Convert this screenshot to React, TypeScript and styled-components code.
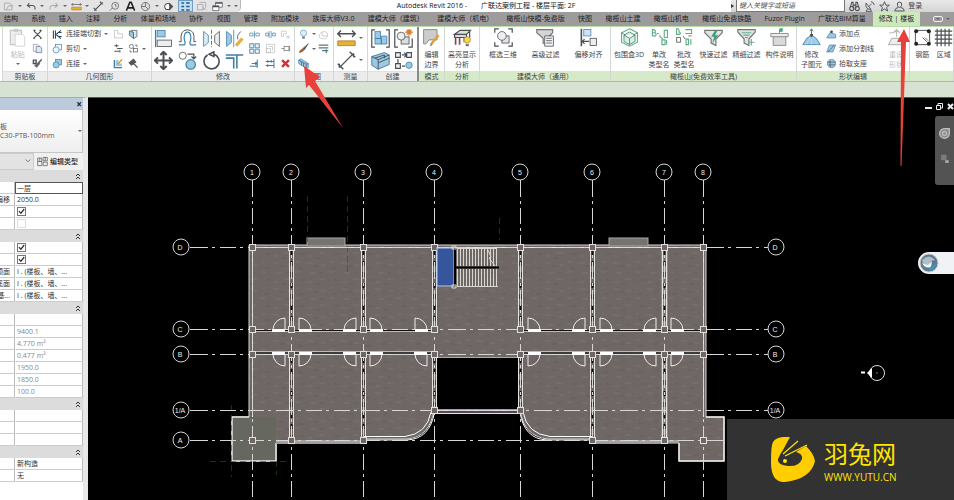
import React from 'react';
import styled, { createGlobalStyle, css } from 'styled-components';

const GlobalStyle = createGlobalStyle`
  * { box-sizing: border-box; }
  body { margin: 0; background: #000; }
  body, button, input, select, table {
    font-family: "Open Sans", "Noto Sans CJK SC", sans-serif;
    font-size: 7px;
    line-height: 10px;
    color: #333;
  }
  button { border: 0; padding: 0; background: none; cursor: pointer; }
`;

/* ---------- icons ---------- */

const K = '#4a4f54';
const B = '#9cc9e4';
const BD = '#3f7ea8';
const G = '#5dae85';

const small: Record<string, React.ReactNode> = {
  open: <path d="M2 3h8l3 3v7H2zM5 13l3-6h7" stroke="#999" />,
  undo: <path d="M5 3L2 6.500l4 3M2 6.500h7q5 0 4 6" stroke="#555" strokeWidth="1.500" />,
  redo: <path d="M11 3l3 3.500-4 3M14 6.500H7q-5 0-4 6" stroke="#aaa" strokeWidth="1.500" />,
  ruler: <><path d="M1 5h14M3 3L1 5l2 2M13 3l2 2-2 2" stroke={K} /><path d="M1 9h14v4H1z" fill="#e5ad32" stroke="#b9861c" /></>,
  dim: <path d="M2 14L14 2M1 10l4 4M10 1l4 4" stroke={K} strokeWidth="1.600" />,
  tag: <><circle cx="9" cy="7" r="5" stroke={K} /><path d="M1 14l4-4M8 5h2v4" stroke={K} /></>,
  letter: <path d="M2 14L7 2h2l5 12M4.500 10h7" stroke="#222" strokeWidth="2.200" />,
  home: <><circle cx="8" cy="8" r="6" fill="#ddd" stroke={K} /><path d="M2 8h6V2M8 8l4 4" stroke={K} /></>,
  section: <><circle cx="7" cy="8" r="4.500" fill="#fff" stroke={K} strokeWidth="1.500" /><path d="M9 2l6 6-6 6z" fill={K} /></>,
  thin: <path d="M2 3h4M2 8h4M2 13h4M9 3h5M9 8h5M9 13h5" stroke="#225c8c" strokeWidth="2.200" />,
  closeWin: <path d="M5 2h9v7M2 5h8v8H2zM10 9l4 4M14 9l-4 4" stroke="#999" />,
  windows: <><path d="M5 2h10v7H5z" fill="#fff" stroke={K} /><path d="M1 7h9v7H1z" fill="#fff" stroke={K} /><path d="M5 3h10M1 8h9" stroke={K} strokeWidth="2" /></>,
  binoc: <><circle cx="4" cy="11" r="3" stroke={K} strokeWidth="1.500" /><circle cx="12" cy="11" r="3" stroke={K} strokeWidth="1.500" /><path d="M2 9l2-7h2v9M14 9l-2-7h-2v9M6 6h4" stroke={K} strokeWidth="1.500" /></>,
  dish: <path d="M3 3q-2 9 7 9zM7 8l4-4M10 1q4 0 5 5M5 12l-2 3h8l-2-3" stroke={K} strokeWidth="1.300" />,
  star: <path d="M8 1l2 5h5l-4 3.500 1.500 5L8 11.500l-4.500 3 1.500-5L1 6h5z" stroke={K} strokeWidth="1.300" />,
  user: <path d="M8 1.500q4 0 3 5-1 3-3 3t-3-3q-1-5 3-5zM1 14q1-4 5-4.500M15 14q-1-4-5-4.500M1 14.500h14" stroke={K} strokeWidth="1.400" />,
  cut: <path d="M3 3l10 10M13 3L3 13M2 2h3M11 2h3M2 13l2 1M14 13l-2 1" stroke={K} strokeWidth="1.700" />,
  copy: <><path d="M2 2h6l2 2v8H2z" fill="#fff" stroke="#7790a0" /><path d="M6 5h6l2 2v7H6z" fill="#d8ecf5" stroke="#668" /></>,
  match: <><path d="M2 3h4v5H2zM9 8l5-6" stroke={K} strokeWidth="2" /><path d="M3 11l4 3 5-6-3-2z" fill="#666" /></>,
  cope: <path d="M2 2v12M5 2v12M6 8l7-6M6 8l7 6M9 5h5M9 11h5" stroke="#31495a" strokeWidth="1.600" />,
  cutGeo: <><rect x="5" y="2" width="9" height="8" fill="#fff" stroke={BD} /><circle cx="6" cy="10" r="4.500" fill="#eef6fa" stroke={BD} /></>,
  join: <><rect x="5" y="2" width="9" height="8" fill={B} stroke={BD} /><circle cx="6" cy="10" r="4.500" fill={B} stroke={BD} /></>,
  wallL: <path d="M2 2h5v5h7v6H2z" stroke="#b4b4b4" />,
  beam: <path d="M2 4h6M5 2v4M6 8h8M2 12h7M10 10v4" stroke={K} strokeWidth="1.400" />,
  edit: <><path d="M2 3v11h11" stroke={BD} strokeWidth="2" /><path d="M4 3v9h9V8H8V3z" fill={B} /><path d="M7 9l6-7" stroke="#cf9b29" strokeWidth="2" /></>,
  paint: <><path d="M2 3l6 2v9l-6-5z" fill={B} stroke={K} /><path d="M4 2h9v9l-5 3V5z" fill="#d9e8ee" stroke={K} /></>,
  split: <><circle cx="5" cy="5" r="3" stroke={K} /><rect x="8" y="8" width="6" height="5" stroke={K} /><path d="M10 3h3v3M3 10v3h3" stroke={K} /></>,
  hammer: <path d="M2 7l6-5 3 4-6 4zM8 8l6 6" stroke="#555" fill="#555" strokeWidth="2" />,
  splitEl: <path d="M1 6h5v4H1zM10 6h5v4h-5zM8 3v10" stroke={BD} />,
  gap: <path d="M1 6h4v4H1zM11 6h4v4h-4zM6 3v10M9 3v10" stroke={BD} />,
  offset: <path d="M2 3h7v4H5v4H2zM9 9l4 4M9 13h4V9" stroke="#bbb" />,
  array: <path d="M1 1h6v6H1zM9 1h6v6H9zM1 9h6v6H1zM9 9h6v6H9z" fill="#e5f1f7" stroke={BD} strokeWidth="1.200" />,
  scale: <path d="M2 2h12v12H2zM2 8h6v6H2zM5 5h6v6" stroke="#bbb" />,
  pin: <path d="M2 8h4M6 4v8M6 5h7v6H6M14 4v8" stroke="#666" />,
  trim1: <path d="M1 12h12M4 8h8M12 2v12M9 6l3 2-3 2" stroke={BD} strokeWidth="1.500" />,
  trim2: <path d="M1 5h12M1 11h12M13 1v14M4 3v4M9 3v4M4 9v4" stroke={BD} strokeWidth="1.500" />,
  del: <path d="M3 3l10 10M13 3L3 13" stroke="#cf3434" strokeWidth="3.500" />,
  bulb: <><circle cx="8" cy="6" r="4.500" fill="#dceefa" stroke="#719cb8" /><path d="M6 11h4v3H6z" fill="#777" /></>,
  brush: <><path d="M15 1L7 8l2 2z" fill="#555" stroke="#555" /><path d="M8 8q-4 0-7 6 5 1 8-4z" fill="#9b642b" /></>,
  hideBox: <path d="M2 8l4-4h5l3 2v5l-4 3H5l-3-2zM6 4v6h8" stroke="#bbb" />,
  lines: <path d="M1 3h14M1 7h14M6 11h9M12 9v6" stroke="#587586" strokeWidth="1.700" />,
  box3d: <><path d="M1 3l3-2 11 7v6l-3 1L1 8z" fill={B} stroke={BD} /><path d="M1 3l11 6v6M12 9l3-1M5 5v6M8 7v6" stroke="#31627f" /></>,
  addPt: <><path d="M1 13l5-8 8 3v5z" fill={B} stroke={BD} /><circle cx="8" cy="4" r="2" fill={K} /></>,
  addLine: <><path d="M1 13L5 3h9l-4 10z" fill={B} stroke={BD} /><path d="M3 13l9-10" stroke={K} /></>,
  pick: <><circle cx="8" cy="8" r="6" fill={B} stroke={BD} /><path d="M2 6h12M4 10h9M6 4v9" stroke={K} /></>,
  typeEd: <path d="M1 3h6v11H1zM9 2h6v5H9zM9 9h6v5H9zM1 8h6M4 3v5M12 2v5" stroke={K} />,
};

const big: Record<string, React.ReactNode> = {
  paste: <><path d="M3 3h14v18H3z" fill="#eee" stroke="#c5c5c5" strokeWidth="1.500" /><path d="M7 1h6v4H7z" fill="#ccc" /><path d="M9 8h9l3 3v12H9z" fill="#fff" stroke="#ccc" /></>,
  align: <><path d="M2 1v22" stroke={BD} strokeWidth="1.600" /><rect x="4" y="2" width="10" height="8" fill={B} stroke={BD} /><rect x="4" y="14" width="18" height="8" fill="#eee" stroke={K} /></>,
  offset: <><path d="M1 20h7q2-2 0-6Q7 4 12 4t4 10q-2 4 0 6h7" stroke={BD} strokeWidth="1.500" /><path d="M1 16h3Q2 1 12 1t8 15h3" stroke={K} strokeWidth="1.200" /></>,
  mirror: <><path d="M2 3l6 5v9l-6 5z" fill="#dcecf3" stroke={BD} /><path d="M22 3l-6 5v9l6 5z" fill="#eee" stroke={K} /><path d="M12 1v22" stroke={K} strokeDasharray="5 2" /></>,
  mirrorDraw: <><path d="M2 3l6 5v9l-6 5z" fill={B} stroke={BD} /><path d="M20 3l-4 5v5" stroke={K} /><path d="M11 1v22" stroke={BD} /><path d="M14 21l8-9" stroke="#e1b13d" strokeWidth="4" /></>,
  move: <path d="M12 1v22M1 12h22M8 5l4-4 4 4M8 19l4 4 4-4M5 8l-4 4 4 4M19 8l4 4-4 4" stroke={K} strokeWidth="2.500" />,
  copy: <><circle cx="6" cy="6" r="4.500" stroke={K} /><path d="M12 4h8v5M17 7l3 3 3-3" stroke={K} strokeWidth="1.500" /><circle cx="16" cy="17" r="6" fill={B} stroke={BD} strokeWidth="1.500" /></>,
  rotate: <path d="M15 4A9.500 9.500 0 1 1 7 5M15 1v6l-6-3z" stroke={K} strokeWidth="2" />,
  trim: <path d="M1 5h14v17M1 9h10v13M16 5h7" stroke={BD} strokeWidth="2" />,
  measure: <><path d="M1 6h22M5 2L1 6l4 4M19 2l4 4-4 4" stroke={K} strokeWidth="1.800" /><path d="M1 15h22v6H1z" fill="#e6b13b" stroke="#a97718" /></>,
  diag: <path d="M3 21L21 3M1 16l7 7M16 1l7 7M3 21v-5M21 3v5" stroke={K} strokeWidth="1.700" />,
  comp: <><path d="M5 1H1v22h4M19 1h4v22h-4" stroke={K} strokeWidth="1.500" /><path d="M5 3h7v9H5zM5 12h8v7H5zM13 9h7v10h-7z" fill={B} stroke={BD} /></>,
  family: <><path d="M5 1H1v22h4M18 23h5V12" stroke={K} strokeWidth="1.500" /><rect x="9" y="10" width="10" height="9" fill="#ddd" stroke={K} /><circle cx="9" cy="9" r="5" fill="#eee" stroke={K} /><path d="M19 0v9M14 4h10M16 1l6 6M22 1l-6 6" stroke="#dd7b2b" strokeWidth="1.600" /></>,
  blocks: <><path d="M1 7l16-5 6 3v12L9 23l-8-5z" fill={B} stroke={BD} strokeWidth="1.200" /><path d="M1 7l8 4v12M9 11l14-6M5 9l12-4v4M9 15l14-6" stroke={K} strokeWidth="1.200" /></>,
  group: <><path d="M2 2h6v6H2zM16 2h6v6h-6zM2 16h6v6H2z" fill="#eee" stroke={K} strokeWidth="1.400" /><circle cx="19" cy="18" r="4" fill={B} stroke={BD} /><path d="M10 5h5M5 10v5M13 2l3 3-3 3M10 19h4" stroke={K} strokeWidth="1.500" /></>,
  boundary: <><path d="M2 2h17v13H9l-4 5H2z" fill="#ccc" stroke="#777" /><path d="M11 21l10-12" stroke="#dca23b" strokeWidth="3" /><path d="M10 22l3-1" stroke={K} /></>,
  table: <><path d="M2 8l7-5h13l-5 5zM2 8h15v4H2zM3 12v9M8 12v9M14 12v6M21 4v10" fill="#ddd" stroke={K} strokeWidth="1.500" /><circle cx="18" cy="15" r="4" fill="#f5d65b" stroke="#b6902a" /><path d="M16 20h4v3h-4z" fill="#777" /><path d="M4 13v8M9 13v8" stroke="#b65353" /></>,
  frame: <><path d="M1 6V1h5M18 1h5v5M23 18v5h-5M6 23H1v-5" stroke={K} strokeWidth="1.500" /><rect x="10" y="10" width="9" height="9" fill="#e4e4e4" stroke={K} /><circle cx="10" cy="10" r="5.500" fill="#eee" stroke={K} /></>,
  filter: <><path d="M1 2h20v4l-7 7v8l-5-2v-6L1 6z" fill="#d5d5d5" stroke="#777" strokeWidth="1.500" /><path d="M11 10h11v13H11z" fill="#f4f4f4" stroke={K} /><path d="M13 13h7M13 16h7M13 19h7" stroke={K} /></>,
  shift: <><path d="M3 1v22" stroke={K} strokeWidth="2" /><rect x="6" y="2" width="9" height="8" fill="#cfe3f7" stroke="#5085b7" /><rect x="14" y="13" width="8" height="9" fill="#eee" stroke={K} /><path d="M4 17h9M7 14l-3 3 3 3" stroke={K} strokeWidth="1.500" /></>,
  bbox: <><path d="M12 1l10 5v12l-10 5-10-5V6z" stroke={G} strokeWidth="1.400" /><path d="M12 5l7 4v8l-7 4-7-4V9zM5 9l7 4 7-4M12 13v8M2 6l5 3M22 6l-5 3" stroke="#397c60" fill="#dcefe5" /></>,
  ren1: <><path d="M3 2v8h4q2-2-1-4 2-2-1-4zM3 6h3M12 10l4 4M15 15h4v6h-4zM21 15v6M18 3h4v9h-4z" stroke={G} strokeWidth="1.400" /><path d="M9 7h2M12 9h1" stroke={K} /></>,
  ren2: <><path d="M2 1v7h4q2-2-1-3 1-2-1-4zM13 2h8v5h-8M14 14h3v7h-3zM20 14v7" stroke={G} strokeWidth="1.400" /><path d="M2 12h5v6H2zM10 10l3 4M17 10h4" stroke={K} /></>,
  fast: <><path d="M1 3h22v3l-8 8v8l-6-3v-5L1 6z" fill="#e5e5e5" stroke="#777" strokeWidth="1.500" /><path d="M14 3l-5 8h4l-3 9 8-11h-4l3-6z" fill="#2fa577" /></>,
  fine: <><path d="M1 2h22v3l-8 9v8l-6-3v-5L1 5z" fill="#e2e2e2" stroke="#777" strokeWidth="1.500" /><path d="M6 6h12M8 9h8M10 12h4M18 14v8M14 18h8" stroke="#61ae8d" strokeWidth="1.500" /></>,
  info: <><path d="M4 10h16v12H4z" fill="#d9d9d9" stroke="#777" /><path d="M1 7h22v4H1z" fill="#eee" stroke="#777" /><path d="M12 6V2" stroke={K} /><circle cx="14" cy="2.500" r="2.500" fill="#51a681" /></>,
  subel: <><path d="M1 21l5-8 6-4 6 4 5 8z" fill={B} stroke={BD} /><path d="M12 9v12M12 9L5 21M12 9l7 12" stroke="#b8e0f3" /><path d="M12 2v10M10 4l2-3 2 3" stroke={K} /><circle cx="12" cy="9" r="2" fill={K} /></>,
  reset: <path d="M2 21l4-8h12l4 8zM12 2v9M8 6l4-4 4 4M3 6h5" stroke="#bbb" fill="#eee" strokeWidth="1.500" />,
  rebar: <><path d="M3 3h18v18H3z" stroke={K} strokeWidth="1.200" /><path d="M12 12l6 6M15 12l4 4" stroke={K} /><g fill="#222"><circle cx="4" cy="4" r="2.500" /><circle cx="20" cy="4" r="2.500" /><circle cx="4" cy="20" r="2.500" /><circle cx="20" cy="20" r="2.500" /></g></>,
  mesh: <path d="M4 1v22M9 1v22M14 1v22M19 1v22M1 4h22M1 9h22M1 14h22M1 19h22" stroke={K} strokeWidth="1.500" />,
};

const SmallSvg = styled.svg`width: 11px; height: 11px; flex: none; display: block;`;
const BigSvg = styled.svg`width: 19px; height: 19px; flex: none; display: block;`;
const Sm = ({ n }: { n: string }) => <SmallSvg viewBox="0 0 16 16" fill="none">{small[n]}</SmallSvg>;
const Lg = ({ n }: { n: string }) => <BigSvg viewBox="0 0 24 24" fill="none">{big[n]}</BigSvg>;

const Caret = styled.span`
  flex: none; width: 0; height: 0;
  border: 2px solid transparent; border-top-color: #666; border-bottom: 0;
`;

/* ---------- title bar ---------- */

const Page = styled.div`min-height: 100vh; display: flex; flex-direction: column; position: relative; overflow: hidden;`;
const TitleBar = styled.header`
  display: grid; grid-template-columns: 241fr 490fr 223fr; height: 12px; background: #fff;
`;
const QuickBar = styled.div`
  display: flex; align-items: center; justify-content: space-between; padding: 0 2px;
  background: #e4e4e4; border-right: 1px solid #bbb; border-radius: 0 0 5px 0;
`;
const QuickButton = styled.button<{ $on?: boolean }>`
  display: flex; align-items: center; height: 12px; padding: 0 1px;
  ${p => p.$on && css`background: #c3def3; border: 1px solid #6d9dc4;`}
`;
const DocTitle = styled.h1`
  margin: 0; display: flex; gap: 14px; align-items: center; justify-content: center;
  font-size: 7px; line-height: 10px; font-weight: 400; color: #111; white-space: nowrap;
`;
const InfoCenter = styled.div`
  display: flex; align-items: center; gap: 2px; background: linear-gradient(#e9e9e9, #d4d4d4);
`;
const Search = styled.input`
  width: 49%; height: 12px; padding: 0 2px; margin-right: 1px; border: 1px solid #777; border-top: 0;
  background: #fff; font-style: italic; &::placeholder { color: #555; opacity: 1; }
`;
const Play = styled.span`width: 0; height: 0; border: 2px solid transparent; border-left: 3px solid #333; border-right: 0;`;

/* ---------- tabs ---------- */

const TabBar = styled.nav`
  display: grid; grid-template-columns: 873fr 47fr 34fr; height: 14px; background: #9d9b9c;
`;
const TabGroup = styled.div`
  display: flex; justify-content: space-between; padding: 0 7px 0 4px; min-width: 0;
`;
const Tab = styled.button<{ $active?: boolean }>`
  white-space: nowrap; color: #222; line-height: 14px;
  ${p => p.$active && css`background: #cde8bb;`}
`;
const TabEnd = styled.div`display: flex; align-items: center; justify-content: center; gap: 3px; padding-left: 8px;`;
const Expand = styled.button`width: 10px; height: 6px; border: 1px solid #eee; border-radius: 2px; display: grid; place-items: center;`;

/* ---------- ribbon ---------- */

const Ribbon = styled.section`
  display: grid; height: 56px; background: #fff;
  grid-template-columns: 3fr 45fr 104fr 143fr 39fr 34fr 51fr 26fr 35fr 131fr 186fr 113fr 44fr;
  border-bottom: 1px solid #9fc98a; border-top: 1px solid #b9dca8;
`;
const PanelBox = styled.div<{ $green?: boolean; $thick?: boolean }>`
  display: flex; flex-direction: column; min-width: 0; overflow: hidden;
  border-right: ${p => (p.$thick ? '2px solid #8a8a8a' : '1px solid #d4d8d2')};
  --title: ${p => (p.$green ? '#d6eac9' : '#ececec')};
`;
const PanelBody = styled.div<{ $cols: string }>`
  flex: 1; display: grid; grid-template-columns: ${p => p.$cols}; min-height: 0;
`;
const PanelTitle = styled.div`
  height: 10px; background: var(--title); border-top: 1px solid #dde3d9; text-align: center; line-height: 9px; white-space: nowrap; color: #444;
`;
const Stack = styled.div<{ $rows?: number }>`
  display: grid; grid-template-rows: repeat(${p => p.$rows ?? 3}, minmax(0, 1fr)); align-items: center; justify-items: start; min-width: 0;
`;
const Tool = styled.button<{ $gap?: number }>`
  display: flex; align-items: center; gap: ${p => p.$gap ?? 3}px; white-space: nowrap; color: #444;
`;
const BigTool = styled.button<{ $dim?: boolean }>`
  display: flex; flex-direction: column; align-items: center; justify-content: flex-start; gap: 3px;
  padding-top: 1px; min-width: 0; white-space: nowrap; color: ${p => (p.$dim ? '#bbb' : '#444')};
`;

const Panel = ({ title, cols, green, thick, children }: {
  title: string; cols: string; green?: boolean; thick?: boolean; children?: React.ReactNode;
}) => (
  <PanelBox $green={green} $thick={thick}>
    <PanelBody $cols={cols}>{children}</PanelBody>
    <PanelTitle>{title}</PanelTitle>
  </PanelBox>
);
const Icons = ({ names }: { names: string[] }) => (
  <Stack>{names.map(n => <Tool key={n} aria-label={n}><Sm n={n} /></Tool>)}</Stack>
);
const LargeIcons = ({ names }: { names: string[] }) => (
  <Stack $rows={2}>{names.map(n => <Tool key={n} aria-label={n}><Lg n={n} /></Tool>)}</Stack>
);
const Big = ({ n, lines, dim }: { n: string; lines: string[]; dim?: boolean }) => (
  <BigTool $dim={dim} disabled={dim}>
    <Lg n={n} />
    <span>{lines.map((l, i) => <React.Fragment key={l}>{i > 0 && <br />}{l}</React.Fragment>)}</span>
  </BigTool>
);

const OptionsBar = styled.div`height: 15px; background: #d8e2d3;`;

/* ---------- properties ---------- */

const Work = styled.main`flex: 1; display: flex; align-items: stretch; background: #000;`;
const Palette = styled.aside`
  flex: 0 0 88px; background: #fff; border-right: 5px solid #e7e8ea; min-width: 0; overflow: hidden;
  border-top: 1px solid #aaa;
`;
const PaletteHead = styled.div`
  display: flex; justify-content: flex-end; align-items: center; height: 11px; background: #bccbdc; padding-right: 1px;
`;
const Close = styled.button`font-weight: 700; font-size: 10px; color: #222;`;
const TypeBox = styled.div`
  display: flex; align-items: center; justify-content: space-between; height: 44px; border: 1px solid #c6c6c6; border-left: 0;
  background: linear-gradient(#fff, #eee); white-space: nowrap; line-height: 9px;
`;
const TypeName = styled.div`display: flex; flex-direction: column; color: #555;`;
const TypeRow = styled.div`
  display: flex; height: 17px; align-items: stretch; background: #f1f1f1;
`;
const Instance = styled.select`
  width: 34px; appearance: none; border: 1px solid #ccc; border-left: 0; background: #e3e3e3; border-radius: 0;
`;
const SelectWrap = styled.div`display: grid; position: relative;`;
const Chevron = styled.svg`position: absolute; right: 3px; top: 5px; width: 6px; height: 6px; pointer-events: none;`;
const EditType = styled.button`display: flex; align-items: center; gap: 2px; padding-left: 3px; color: #222; font-weight: 500;`;
const Props = styled.table`
  width: 100%; table-layout: fixed; border-collapse: separate; border-spacing: 0;
`;
const GroupCell = styled.th`
  height: 12px; padding: 0 2px; background: #dcdcdc; text-align: right; line-height: 0; font-weight: 400;
`;
const LabelCell = styled.th`
  width: 15px; height: 12px; padding: 0 4px 0 0; border-right: 1px solid #bbb; border-bottom: 1px solid #ccc;
  font-weight: 400; line-height: 10px; color: #333;
`;
const LabelText = styled.div`display: flex; justify-content: flex-end; white-space: nowrap; overflow: hidden;`;
const ValueCell = styled.td<{ $dim?: boolean; $focus?: boolean }>`
  height: 12px; padding: 0 1px; white-space: nowrap; overflow: hidden; line-height: 9px;
  color: ${p => (p.$dim ? '#888' : '#333')};
  border: 1px solid transparent; border-bottom: 1px solid #ccc; border-right-color: #bbb; border-top: 0;
  ${p => p.$focus && css`border: 1px solid #555;`}
`;
const Field = styled.input`width: 100%; height: 9px; padding: 0; border: 0; outline: 0; display: block; line-height: 9px; background: none;`;
const Check = styled.input`
  appearance: none; display: block; width: 9px; height: 9px; margin: 0; border: 1px solid #777; background: #fff;
  &:checked::before {
    content: ''; display: block; width: 7px; height: 7px; background: #333;
    clip-path: polygon(5% 50%, 20% 38%, 40% 62%, 82% 8%, 96% 20%, 42% 88%);
  }
  &:disabled { border-color: #ddd; }
`;

type Row = { label?: string; value?: string; check?: boolean; off?: boolean; dim?: boolean; focus?: boolean };
const layers = 'I . (楼板、墙、...';
const groups: Row[][] = [
  [{ value: '一层', focus: true }, { label: '偏移', value: '2050.0' }, { check: true }, { check: false, off: true }],
  [{ check: true }, { check: true }, { label: '顶面', value: layers }, { label: '底面', value: layers }, { label: '基...', value: layers }],
  [{}, { value: '9400.1', dim: true }, { value: '4.770 m²', dim: true }, { value: '0.477 m³', dim: true },
    { value: '1950.0', dim: true }, { value: '1850.0', dim: true }, { value: '100.0', dim: true }],
  [{}, {}, {}],
  [{ value: '新构造' }, { value: '无' }],
];
const Fold = styled.svg`width: 6px; height: 8px;`;

const Properties = () => (
  <Palette aria-label="属性">
    <PaletteHead><Close aria-label="关闭">×</Close></PaletteHead>
    <TypeBox>
      <TypeName><span>板</span><span>C30-PTB-100mm</span></TypeName>
      <Caret />
    </TypeBox>
    <TypeRow>
      <SelectWrap>
        <Instance aria-label="实例"><option> </option></Instance>
        <Chevron viewBox="0 0 8 8" fill="none" stroke="#555"><path d="M1 2l3 3 3-3" /></Chevron>
      </SelectWrap>
      <EditType><Sm n="typeEd" />编辑类型</EditType>
    </TypeRow>
    <Props>
      <colgroup><col width="15" /><col /></colgroup>
      {groups.map((rows, g) => (
        <tbody key={g}>
          <tr><GroupCell colSpan={2}>
            <Fold viewBox="0 0 6 8" fill="none" stroke="#333"><path d="M1 4l2-2 2 2M1 7l2-2 2 2" /></Fold>
          </GroupCell></tr>
          {rows.map((r, i) => (
            <tr key={i}>
              <LabelCell scope="row"><LabelText>{r.label}</LabelText></LabelCell>
              <ValueCell $dim={r.dim} $focus={r.focus}>
                {r.check !== undefined
                  ? <Check type="checkbox" aria-label={`选项 ${i}`} defaultChecked={r.check} disabled={r.off} />
                  : r.focus ? <Field aria-label="标高" defaultValue={r.value} /> : r.value}
              </ValueCell>
            </tr>
          ))}
        </tbody>
      ))}
    </Props>
  </Palette>
);

/* ---------- floor plan ---------- */

const Canvas = styled.section`flex: 1; min-width: 0; position: relative; background: #000; border-top: 1px solid #555;`;
const PlanSvg = styled.svg`display: block; width: 100%; height: auto;`;

const axes: [string, number][] = [['1', 252], ['2', 291], ['3', 363], ['4', 434], ['5', 520], ['6', 592], ['7', 664], ['8', 703]];
const levels: [string, number][] = [['D', 247], ['C', 329], ['B', 354], ['1/A', 410], ['A', 440]];
/* x of the leaf, and the side the opening lies on */
const doors: [number, number][] = [[285, -1], [299, 1], [356, -1], [370, 1], [528, 1], [585, -1], [600, 1], [656, -1], [671, 1]];

const Door = ({ x, dir, up, y }: { x: number; dir: number; up: number; y: number }) => (
  <g>
    <path d={`M${x} ${y}v${-12 * up}A12 12 0 0 ${dir * up > 0 ? 1 : 0} ${x + 12 * dir} ${y}`} fill="none" stroke="#eee" />
    <rect x={dir > 0 ? x : x - 13} y={y - (up > 0 ? 1 : 2)} width="13" height="3" fill="#fff" />
  </g>
);

const outline = 'M249 245H706V417H724V461H679V443H592V439H548Q524 437 520 410H434Q430 437 407 439H363V443H276V461H232V417H249Z';

const Plan = () => (
  <PlanSvg viewBox="88 98 866 402" role="img" aria-label="楼层平面 2F">
    <defs>
      <pattern id="slab" width="34" height="26" patternUnits="userSpaceOnUse">
        <rect width="34" height="26" fill="#6f6765" />
        <path d="M1 3h6M15 5h4M4 13h6M23 12h5M2 22h4M24 2h3M13 19h6" stroke="#746d69" strokeWidth="2" />
        <path d="M8 6h4M26 8h5M14 13h3M10 24h4M28 20h5" stroke="#6a625f" strokeWidth="2" />
      </pattern>
    </defs>
    <path d={outline} fill="url(#slab)" stroke="#d8d4d2" />
    <path d="M232 417H276V461H232Z" fill="#666860" />
    <path d="M249 417H232V461H276V443M706 417H724V461H679V443" fill="none" stroke="#e8e8e8" strokeWidth="1.500" />
    <path d="M436 358H519V409H436Z" fill="#000" />
    <g fill="#777371" stroke="#aaa">
      <rect x="307" y="238" width="38" height="8" /><rect x="609" y="238" width="39" height="8" />
    </g>
    <g stroke="#1f5a2a" strokeDasharray="6 4" opacity=".6">
      <path d="M307.500 196v48M347.500 196v76M499.500 218v22M231.500 405v72M210 461.500h78M276.500 461v14" />
    </g>

    <g stroke="#e6e3e1" fill="none">
      <path d="M252.500 417V247.500H703.500V417M276 441H363" />
      {[291.500, 363.500, 592.500, 664.500].map(x => <path key={x} d={`M${x - 2} 248V331M${x + 2} 248V331M${x - 2} 353V441M${x + 2} 353V441`} strokeWidth={x > 660 ? 1.500 : 1} />)}
      {[434.500, 520.500].map(x => <path key={x} d={`M${x - 2} 248V331M${x + 2} 248V331M${x - 2} 353V410M${x + 2} 353V410`} />)}
      <path d="M252 331.500H434M520 331.500H703M252 351.500H434M520 351.500H703" stroke="#bbb" />
      <path d="M592 441H679" />
      <path d="M363 436.500H405Q427 434 431 412M434.500 412Q430 439 407 440H363" stroke="#fff" />
      <path d="M592 436.500H550Q527 434 523 412M520 412Q524 439 547 440H592" stroke="#fff" />
      <path d="M436 357.500H519" stroke="#aaa" />
      <path d="M436 410.500H519M436 413.500H519" />
      <path d="M436 412H519M276 443.500H363M592 443.500H664" stroke="#b58aac" />
    </g>
    <path d="M256 330.500H434M522 330.500H703M256 353H434M522 353H703" stroke="#111" />
    <path d="M256 354.500H434M522 354.500H703" stroke="#ddd" />
    <g stroke="#111" strokeDasharray="5 6">
      {[291.500, 363.500, 434.500, 520.500, 592.500, 664.500].map(x => <path key={x} d={`M${x} 250V326M${x} 358V${x > 430 && x < 530 ? 406 : 436}`} strokeWidth="2" />)}
    </g>

    <g stroke="#d6d6d6" fill="none">
      {axes.map(([n, x]) => <path key={n} d={`M${x + .5} 180V497`} strokeDasharray="17 4 3 4 16 4 3 4 16 4 3 4" />)}
      {levels.map(([n, y]) => <path key={n} d={`M190 ${y + .5}H768`} strokeDasharray="18 4 3 5 16 4 3 5 16 4 3 5" />)}
      {axes.map(([n, x]) => <circle key={n} cx={x} cy="172" r="8" />)}
      {levels.map(([n, y]) => <g key={n}><circle cx="181" cy={y} r="8" /><circle cx="776" cy={y} r="8" /></g>)}
    </g>
    <g fill="#eee" fontSize="7" textAnchor="middle" fontFamily="Liberation Sans, sans-serif">
      {axes.map(([n, x]) => <text key={n} x={x} y="175">{n}</text>)}
      {levels.map(([n, y]) => <g key={n}><text x="180" y={y + 3}>{n}</text><text x="775" y={y + 3}>{n}</text></g>)}
    </g>

    {doors.map(([x, dir]) => (
      <g key={x}><Door x={x} dir={dir} up={1} y={330} /><Door x={x} dir={dir} up={-1} y={354} /></g>
    ))}
    <Door x={415} dir={1} up={1} y={330} /><Door x={427} dir={-1} up={-1} y={354} />

    <g fill="#6f6765" stroke="#e2dfdd">
      {axes.map(([n, x]) => {
        const inner = n === '4' || n === '5';
        return [247, 329, 354, inner ? 410 : 440].map(y => <rect key={n + y} x={x - 2.500} y={y - 2.500} width="6" height="6" />);
      })}
    </g>

    <rect x="437" y="248" width="17" height="38" fill="#35569c" stroke="#b8c7e4" />
    <path d="M455 248V286" stroke="#000" strokeWidth="2" />
    <g stroke="#d8d8d0" fill="none">
      {Array.from({ length: 14 }, (_, i) => <path key={i} d={`M${457.500 + i * 3} 248V266M${457.500 + i * 3} 269V286`} />)}
      <path d="M457 248.500H496M457 286.500H498M487 248l4 9-2 1 6 8" />
      <path d="M452 246h4v3h-4zM452 285h4v3h-4z" />
    </g>
    <path d="M455 267.500H499" stroke="#000" strokeWidth="2" />

    <circle cx="877" cy="373" r="7.500" fill="none" stroke="#ddd" />
    <path d="M867 373l5-5v10z" fill="#fff" /><path d="M861 372.500h4" stroke="#fff" strokeWidth="2" /><circle cx="877" cy="373" r=".7" fill="#aaa" />
  </PlanSvg>
);

const WindowButtons = styled.div`position: absolute; top: 4px; right: 0; display: flex; gap: 4px;`;
const WinSvg = styled.svg`width: 7px; height: 9px; display: block;`;
const NavBar = styled.div`
  position: absolute; top: 18px; right: 0; width: 19px; height: 69px; border-radius: 3px 0 0 3px; background: #535353;
  display: flex; flex-direction: column; align-items: center; gap: 15px; padding-top: 12px;
`;
const Pill = styled.button`
  position: absolute; top: 154px; right: 0; width: 36px; height: 22px; border-radius: 11px 0 0 11px; background: #f1f2f5;
  display: flex; align-items: center; padding-left: 1px;
`;
const Orb = styled.svg`width: 20px; height: 20px;`;
const Brand = styled.div`
  position: absolute; right: 0; bottom: 0; width: 227px; height: 81px; background: #323232;
  display: flex; align-items: center; gap: 8px; padding-left: 44px;
`;
const BrandMark = styled.svg`width: 45px; height: 46px;`;
const BrandText = styled.div`display: flex; flex-direction: column; color: #ffe600;`;
const BrandName = styled.span`font-size: 24px; line-height: 34px;`;
const BrandUrl = styled.a`font-size: 10px; line-height: 12px; color: #ffe600; text-decoration: none;`;
const Arrows = styled.svg`position: absolute; left: 0; top: 0; width: 100%; pointer-events: none;`;

const tabs = ['结构', '系统', '插入', '注释', '分析', '体量和场地', '协作', '视图', '管理', '附加模块', '族库大师V3.0',
  '建模大师（建筑）', '建模大师（机电）', '橄榄山快模-免费版', '快图', '橄榄山土建', '橄榄山机电', '橄榄山免费族酷', 'Fuzor Plugin', '广联达BIM算量'];
const quick = ['open', '.', 'undo', '.', 'redo', '.', 'ruler', '.', 'dim', 'tag', 'letter', 'home', '.', 'section', 'thin', 'closeWin', 'windows', '.', '.'];

export default function App() {
  return (
    <Page>
      <GlobalStyle />
      <TitleBar>
        <QuickBar>
          {quick.map((n, i) => (n === '.' ? <Caret key={i} /> : <QuickButton key={i} aria-label={n} $on={n === 'thin'}><Sm n={n} /></QuickButton>))}
        </QuickBar>
        <DocTitle><span>Autodesk Revit 2016 -</span><span>广联达案例工程 - 楼层平面: 2F</span></DocTitle>
        <InfoCenter>
          <Play />
          <Search aria-label="搜索" placeholder="键入关键字或短语" />
          {['binoc', 'dish', 'star', 'user'].map(n => <QuickButton key={n} aria-label={n}><Sm n={n} /></QuickButton>)}
          <Tool>登录</Tool>
        </InfoCenter>
      </TitleBar>
      <TabBar>
        <TabGroup>{tabs.map(t => <Tab key={t}>{t}</Tab>)}</TabGroup>
        <Tab $active>修改 | 楼板</Tab>
        <TabEnd><Expand aria-label="展开"><Caret /></Expand><Caret /></TabEnd>
      </TabBar>
      <Ribbon>
        <PanelBox />
        <Panel title="剪贴板" cols="30fr 15fr">
          <BigTool $dim><Lg n="paste" /><span>粘贴</span><Caret /></BigTool>
          <Icons names={['cut', 'copy', 'match']} />
        </Panel>
        <Panel title="几何图形" cols="4fr 62fr 15fr 23fr">
          <span />
          <Stack>
            <Tool><Sm n="cope" />连接端切割 <Caret /></Tool>
            <Tool><Sm n="cutGeo" />剪切 <Caret /></Tool>
            <Tool><Sm n="join" />连接 <Caret /></Tool>
          </Stack>
          <Icons names={['wallL', 'beam', 'edit']} />
          <Stack>
            <Tool aria-label="paint"><Sm n="paint" /></Tool>
            <Tool aria-label="split"><Sm n="split" /><Caret /></Tool>
            <Tool aria-label="hammer"><Sm n="hammer" /></Tool>
          </Stack>
        </Panel>
        <Panel title="修改" cols="2fr 24fr 24fr 24fr 24fr 16fr 15fr 14fr">
          <span />
          <LargeIcons names={['align', 'move']} />
          <LargeIcons names={['offset', 'copy']} />
          <LargeIcons names={['mirror', 'rotate']} />
          <LargeIcons names={['mirrorDraw', 'trim']} />
          <Icons names={['splitEl', 'array', 'trim1']} />
          <Icons names={['gap', 'scale', 'trim2']} />
          <Icons names={['offset', 'pin', 'del']} />
        </Panel>
        <Panel title="视图" cols="3fr 21fr 15fr">
          <span />
          <Stack>
            <Tool aria-label="bulb"><Sm n="bulb" /><Caret /></Tool>
            <Tool aria-label="brush"><Sm n="brush" /><Caret /></Tool>
            <Tool aria-label="box"><Sm n="box3d" /></Tool>
          </Stack>
          <Stack><Tool aria-label="hide"><Sm n="hideBox" /></Tool><Tool aria-label="lines"><Sm n="lines" /></Tool></Stack>
        </Panel>
        <Panel title="测量" cols="3fr 31fr">
          <span />
          <Stack $rows={2}>
            <Tool aria-label="measure"><Lg n="measure" /><Caret /></Tool>
            <Tool aria-label="dimension"><Lg n="diag" /><Caret /></Tool>
          </Stack>
        </Panel>
        <Panel title="创建" cols="3fr 24fr 24fr" thick>
          <span />
          <LargeIcons names={['comp', 'blocks']} />
          <LargeIcons names={['family', 'group']} />
        </Panel>
        <Panel title="模式" cols="1fr" green><Big n="boundary" lines={['编辑', '边界']} /></Panel>
        <Panel title="分析" cols="1fr" green><Big n="table" lines={['高亮显示', '分析']} /></Panel>
        <Panel title="建模大师（通用）" cols="2fr 42fr 43fr 43fr" green>
          <span />
          <Big n="frame" lines={['框选三维']} /><Big n="filter" lines={['高级过滤']} /><Big n="shift" lines={['偏移对齐']} />
        </Panel>
        <Panel title="橄榄山(免费效率工具)" cols="36fr 24fr 26fr 33fr 33fr 33fr" green>
          <Big n="bbox" lines={['包围盒3D']} /><Big n="ren1" lines={['单改', '类型名']} /><Big n="ren2" lines={['批改', '类型名']} />
          <Big n="fast" lines={['快速过滤']} /><Big n="fine" lines={['精细过滤']} /><Big n="info" lines={['构件说明']} />
        </Panel>
        <Panel title="形状编辑" cols="29fr 57fr 26fr" green>
          <Big n="subel" lines={['修改', '子图元']} />
          <Stack>
            <Tool $gap={2}><Sm n="addPt" />添加点</Tool>
            <Tool $gap={2}><Sm n="addLine" />添加分割线</Tool>
            <Tool $gap={2}><Sm n="pick" />拾取支座</Tool>
          </Stack>
          <Big n="reset" lines={['重设', '形状']} dim />
        </Panel>
        <Panel title="" cols="25fr 19fr" green>
          <Big n="rebar" lines={['钢筋']} /><Big n="mesh" lines={['区域']} />
        </Panel>
      </Ribbon>
      <OptionsBar />
      <Work>
        <Properties />
        <Canvas>
          <Plan />
          <WindowButtons>
            <WinSvg viewBox="0 0 7 9" stroke="#eee" strokeWidth="2"><path d="M0 6h7" /></WinSvg>
            <WinSvg viewBox="0 0 7 9" stroke="#eee" fill="none"><path d="M2 3V1.500h4.500V6H5M.5 3.500h4v4h-4z" /></WinSvg>
            <WinSvg viewBox="0 0 7 9" stroke="#eee" strokeWidth="2"><path d="M1 2l5 5M6 2L1 7" /></WinSvg>
          </WindowButtons>
          <NavBar>
            <SmallSvg viewBox="0 0 16 16" fill="none" stroke="#bbb" strokeWidth="2"><path d="M9 1h6v7a7 7 0 11-6-7z" fill="#888" /><circle cx="8" cy="8" r="3" /></SmallSvg>
            <SmallSvg viewBox="0 0 16 16"><path d="M3 1h8v8H3z" fill="#7c7c72" /><path d="M9 9h5v4H9z" fill="#aaa" /></SmallSvg>
          </NavBar>
          <Pill aria-label="助手">
            <Orb viewBox="0 0 20 20">
              <circle cx="10" cy="10" r="9" fill="#62798c" stroke="#c5cdd4" />
              <path d="M3 7q7-7 13 0l-4 1-2 5-6-3z" fill="#aebfca" /><path d="M3 10l6 2 4-4-1 6q-6 2-9-4z" fill="#eef4f7" /><path d="M10 18q6-1 8-8l-7 4z" fill="#3d95bd" />
            </Orb>
          </Pill>
          <Brand>
            <BrandMark viewBox="0 0 45 46">
              <path d="M19 0Q6-1 2 5 0 8 0 25 0 46 14 45 40 42 44 24 43 17 35 9L25 15Q32 17 31 22 28 30 17 29 6 28 7 22 9 17 12 13Z" fill="#ffcd00" />
              <path d="M12 17L27 4M14 19L36 8" stroke="#ffe600" strokeWidth="1.200" /><circle cx="14" cy="24" r="2" fill="#ffe600" />
            </BrandMark>
            <BrandText><BrandName>羽兔网</BrandName><BrandUrl href="#">WWW.YUTU.CN</BrandUrl></BrandText>
          </Brand>
        </Canvas>
      </Work>
      <Arrows viewBox="0 0 954 170" fill="#e8403a" aria-hidden="true">
        <path d="M304 66L320 77 315 81 343 128 309 85 306 88Z" />
        <path d="M904 29L910 42H906L901.500 166H900.500L901 42H897Z" />
      </Arrows>
    </Page>
  );
}
